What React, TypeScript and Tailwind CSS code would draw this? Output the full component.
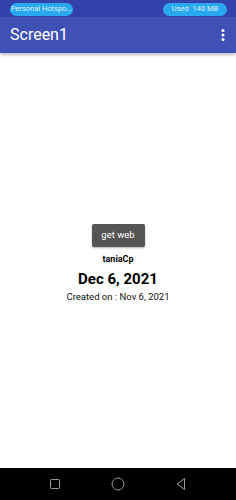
import React from 'react'

const App = () => {
    return (
        <div className="flex h-[500px] w-[236px] flex-col bg-white" style={{ fontFamily: 'Roboto, "Liberation Sans", sans-serif' }}>
            <div className="flex h-[17px] items-center justify-between bg-[#3341a8] px-[10px] pt-[1px]">
                <div className="flex h-[13px] w-[63px] items-center justify-center whitespace-nowrap rounded-full bg-[#29a8f0] text-[7.5px] leading-none text-[#dff2ff]">
                    Personal Hotspo...
                </div>
                <div className="mr-[-1px] flex h-[13px] w-[64px] items-center justify-center whitespace-nowrap rounded-full bg-[#29a8f0] text-[7.5px] leading-none text-[#dff2ff]">
                    Used&nbsp;&nbsp;140 MB
                </div>
            </div>
            <div className="relative z-10 flex h-[36px] items-center justify-between bg-[#3f51b5] pl-[10px] pr-[11px] shadow-[0_2px_3px_rgba(0,0,0,0.25)]">
                <span className="text-[16px] text-white">Screen1</span>
                <svg width="4" height="12" viewBox="0 0 4 12" fill="white">
                    <circle cx="2" cy="1.6" r="1.5" />
                    <circle cx="2" cy="6" r="1.5" />
                    <circle cx="2" cy="10.4" r="1.5" />
                </svg>
            </div>
            <div className="flex flex-1 flex-col items-center pt-[171px]">
                <button className="h-[23px] w-[53px] rounded-[2px] bg-[#555555] text-[9.5px] text-white shadow-[0_1px_2px_rgba(0,0,0,0.3)]">
                    get web
                </button>
                <div className="mt-[7px] text-[9px] font-bold leading-[11px] text-black">taniaCp</div>
                <div className="mt-[5px] text-[15px] font-bold leading-[18px] text-black">Dec 6, 2021</div>
                <div className="mt-[3px] text-[9.5px] leading-[12px] text-[#111]">Created on : Nov 6, 2021</div>
            </div>
            <div className="flex h-[32px] items-center justify-center gap-[49px] bg-black">
                <svg width="14" height="14" viewBox="0 0 14 14" fill="none" stroke="#9a9a9a" strokeWidth="1">
                    <rect x="2.5" y="2.5" width="9" height="9" rx="1" />
                </svg>
                <svg width="14" height="14" viewBox="0 0 14 14" fill="none" stroke="#9a9a9a" strokeWidth="1">
                    <circle cx="7" cy="7" r="6" />
                </svg>
                <svg width="14" height="14" viewBox="0 0 14 14" fill="none" stroke="#9a9a9a" strokeWidth="1">
                    <path d="M10.5 1.5 L3 7 L10.5 12.5 Z" strokeLinejoin="round" />
                </svg>
            </div>
        </div>
    )
}

export default App
